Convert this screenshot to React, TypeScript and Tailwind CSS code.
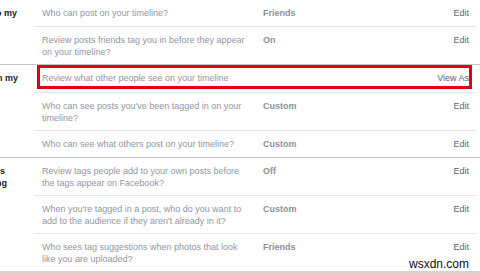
type Row = {
  q: string;
  value?: string;
  action: string;
  highlight?: boolean;
};

type Section = {
  label: { text: string; pr: string }[];
  rows: Row[];
};

const sections: Section[] = [
  {
    label: [{ text: 'Who can add things to my', pr: 'pr-[17px]' }],
    rows: [
      { q: 'Who can post on your timeline?', value: 'Friends', action: 'Edit' },
      { q: 'Review posts friends tag you in before they appear on your timeline?', value: 'On', action: 'Edit' },
    ],
  },
  {
    label: [{ text: 'Who can see things on my', pr: 'pr-[16px]' }],
    rows: [
      { q: 'Review what other people see on your timeline', action: 'View As', highlight: true },
      { q: "Who can see posts you've been tagged in on your timeline?", value: 'Custom', action: 'Edit' },
      { q: 'Who can see what others post on your timeline?', value: 'Custom', action: 'Edit' },
    ],
  },
  {
    label: [
      { text: 'How can I manage tags', pr: 'pr-[29px]' },
      { text: 'people add and tagging', pr: 'pr-[27px]' },
    ],
    rows: [
      { q: 'Review tags people add to your own posts before the tags appear on Facebook?', value: 'Off', action: 'Edit' },
      { q: "When you're tagged in a post, who do you want to add to the audience if they aren't already in it?", value: 'Custom', action: 'Edit' },
      { q: 'Who sees tag suggestions when photos that look like you are uploaded?', value: 'Friends', action: 'Edit' },
    ],
  },
];

function SettingRow({ row, first }: { row: Row; first: boolean }) {
  return (
    <div
      className={`relative grid grid-cols-[210px_1fr_auto] gap-x-[11px] pl-[8px] pr-[7px] pt-[7px] ${
        row.highlight ? 'pb-[8px]' : row.q.length > 48 ? 'pb-[6px]' : 'pb-[7px]'
      } ${first ? '' : 'border-t border-[#e5e6e9]'}`}
    >
      <div className="text-[#9197a3]">{row.q}</div>
      <div className="font-bold text-[#8d9099]">{row.value}</div>
      <div className="text-right text-[#5a6680]">{row.action}</div>
      {row.highlight && (
        <div className="absolute left-[3px] right-[4px] top-0 h-[24px] border-[3px] border-[#e3000f]" />
      )}
    </div>
  );
}

export default function App() {
  return (
    <div className="relative h-[274px] w-[480px] overflow-hidden bg-white font-['Liberation_Sans',Arial,sans-serif] text-[9px] leading-[12px]">
      {sections.map((s, i) => (
        <div
          key={i}
          className={`flex ${i < sections.length - 1 ? 'border-b border-[#c4c5c9]' : 'border-b-[3px] border-[#d3d4d6]'}`}
        >
          <div className="w-[34px] shrink-0 overflow-hidden pt-[7px] font-bold text-[#1d2129]">
            {s.label.map((l, j) => (
              <div key={j} className={`flex justify-end whitespace-nowrap ${l.pr}`}>
                {l.text}
              </div>
            ))}
          </div>
          <div className="w-[442px]">
            {s.rows.map((r, j) => (
              <SettingRow key={j} row={r} first={j === 0} />
            ))}
          </div>
        </div>
      ))}
      <div className="absolute bottom-[4px] right-[11px] text-[12px] leading-[12px] text-[#111]">wsxdn.com</div>
    </div>
  );
}
